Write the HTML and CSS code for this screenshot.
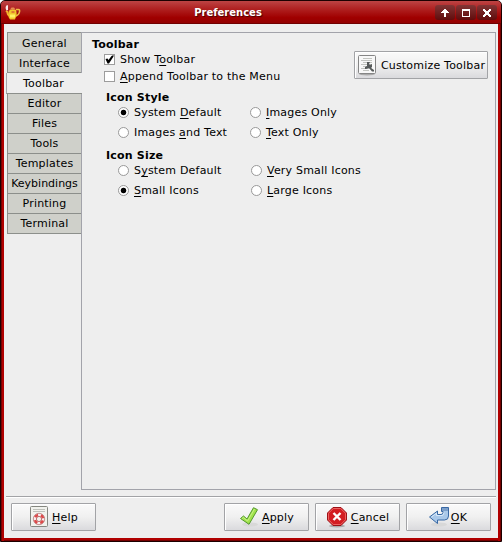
FILE: index.html
```html
<!DOCTYPE html>
<html lang="en">
<head>
<meta charset="utf-8">
<title>Preferences</title>
<link rel="stylesheet" href="styles.css">
</head>
<body>
<div class="window">
  <header class="titlebar">
    <svg class="app-icon" width="16" height="16" viewBox="0 0 16 16">
      <path d="M11 4.500h2.500q1.500 0 1 2.500-.5 3-3.500 4" fill="none" stroke="#edbd43" stroke-width="1.500"/>
      <path d="M4.500 10.500Q2.500 10 2.500 7L1 6" fill="none" stroke="#f3b32d" stroke-width="2"/>
      <path d="M4.500 5Q8 3.500 11 5q1.500 5-.5 8l-.5 1.500H5L3.500 12Q3 8 4.500 5z" fill="#f0c62c"/>
      <path d="M5 4.500h5.500L9 2.500H6.500z" fill="#e58a52"/>
      <path d="M5 9.500h5v3H5z" fill="#fff063"/>
      <path d="M6.500 6h3v2h-3z" fill="#df7a32"/>
      <path d="M1.500 5.500Q-.5 2 2 0l1 .5V5z" fill="#fbeaea"/>
    </svg>
    <h1 class="title">Preferences</h1>
    <div class="controls">
      <span class="control"><svg width="10" height="10" viewBox="0 0 10 10"><path d="M4 1h2v1h1v1h1v1h1v1H6v4H4V5H1V4h1V3h1V2h1z" fill="#fff"/></svg></span>
      <span class="control"><svg width="10" height="10" viewBox="0 0 10 10"><path d="M1 1h8v8H1zM2 3v5h6V3z" fill="#fff" fill-rule="evenodd"/></svg></span>
      <span class="control"><svg width="10" height="10" viewBox="0 0 10 10"><path d="M1 1h2v1h1v1h2V2h1V1h2v2H8v1H7v2h1v1h1v2H7V8H6V7H4v1H3v1H1V7h1V6h1V4H2V3H1z" fill="#fff"/></svg></span>
    </div>
  </header>
  <main class="body">
    <nav class="tabs">
      <div class="tab first"><span>General</span></div>
      <div class="tab second"><span>Interface</span></div>
      <div class="tab selected"><span>Toolbar</span></div>
      <div class="tab"><span>Editor</span></div>
      <div class="tab"><span>Files</span></div>
      <div class="tab"><span>Tools</span></div>
      <div class="tab"><span>Templates</span></div>
      <div class="tab"><span class="tight">Keybindings</span></div>
      <div class="tab"><span>Printing</span></div>
      <div class="tab"><span>Terminal</span></div>
    </nav>
    <section class="panel">
      <div class="options">
        <h2>Toolbar</h2>
        <div class="check"><span class="box"><svg width="9" height="9" viewBox="0 0 9 9"><path d="M0.500 4l2-.5 1 1.500L6.500 1 8.500 0v1.500L4 8.500H2.500z" fill="#000"/></svg></span><span>Show T<u>o</u>olbar</span></div>
        <div class="check"><span class="box"></span><span><u>A</u>ppend Toolbar to the Menu</span></div>
        <h3>Icon Style</h3>
        <div class="radios">
          <div class="radio"><span class="dot on"></span><span class="label">System <u>D</u>efault</span></div>
          <div class="radio"><span class="dot"></span><span class="label"><u>I</u>mages Only</span></div>
          <div class="radio"><span class="dot"></span><span class="label">Images <u>a</u>nd Text</span></div>
          <div class="radio"><span class="dot"></span><span class="label"><u>T</u>ext Only</span></div>
        </div>
        <h3>Icon Size</h3>
        <div class="radios sizes">
          <div class="radio"><span class="dot"></span><span class="label">S<u>y</u>stem Default</span></div>
          <div class="radio"><span class="dot"></span><span class="label"><u>V</u>ery Small Icons</span></div>
          <div class="radio"><span class="dot on"></span><span class="label"><u>S</u>mall Icons</span></div>
          <div class="radio"><span class="dot"></span><span class="label"><u>L</u>arge Icons</span></div>
        </div>
      </div>
      <button class="button customize">
        <svg width="20" height="22" viewBox="0 0 20 22">
          <ellipse cx="10" cy="20" rx="8" ry="1.500" fill="#aaa"/>
          <rect x="1.500" y="1.500" width="17" height="18" rx="1" fill="#f8f8f8" stroke="#858585"/>
          <path d="M6 4.500h9M4 6.500h11M6 8.500h9M4 10.500h11M6 12.500h7M4 14.500h11M6 16.500h6" stroke="#c2c4c0"/>
          <path d="M10 8h3l-1 2 1 1 2-1v3l-1 1 3 2v1.500h-2L12 14l-3 1H8v-2l2-1z" fill="#565a5a"/>
        </svg>
        <span class="label">Customize Toolbar</span>
      </button>
    </section>
  </main>
  <footer class="actions">
    <button class="button help">
      <svg width="20" height="22" viewBox="0 0 20 22">
        <rect x="1.500" y="0.500" width="17" height="20" rx="1" fill="#f1f2ed" stroke="#858780"/>
        <path d="M4 3.500h12M4 5.500h12" stroke="#bfc1bb"/>
        <circle cx="10" cy="13" r="4.200" fill="none" stroke="#f7eeee" stroke-width="3"/>
        <circle cx="10" cy="13" r="4.200" fill="none" stroke="#e04848" stroke-width="2.600" stroke-dasharray="3.600 3" stroke-dashoffset="-1.500"/>
        <circle cx="10" cy="13" r="5.700" fill="none" stroke="#b87777" stroke-width=".8"/>
        <circle cx="10" cy="13" r="2.600" fill="#f1f2ed" stroke="#b04a4a" stroke-width=".8"/>
      </svg>
      <span class="label"><u>H</u>elp</span>
    </button>
    <button class="button apply">
      <svg width="20" height="22" viewBox="0 0 20 22">
        <ellipse cx="11" cy="18.500" rx="8" ry="2" fill="#d8d8d8"/>
        <path d="M1.500 12.500L4.500 10l3.500 3L14.500 1.700l4 2L10 18.300z" fill="#a1e34b" stroke="#53982c" stroke-linejoin="round"/>
        <path d="M3 12.500l1.500-1L8.500 15l7-12" fill="none" stroke="#c8f289"/>
      </svg>
      <span class="label"><u>A</u>pply</span>
    </button>
    <button class="button cancel">
      <svg width="22" height="22" viewBox="0 0 22 22">
        <ellipse cx="11" cy="20" rx="8" ry="1.500" fill="#aaa"/>
        <path d="M7 1.500h8l5.500 5.500v7L15 19.500H7L1.500 14V7z" fill="#d31d22" stroke="#9c1117"/>
        <path d="M7.300 2.500h7.400L19.500 7.300v6.400l-4.800 4.800H7.300l-4.800-4.800V7.300z" fill="none" stroke="#ec6261"/>
        <path d="M7.500 7l7 7M14.500 7l-7 7" stroke="#fff" stroke-width="2.400"/>
      </svg>
      <span class="label"><u>C</u>ancel</span>
    </button>
    <button class="button ok">
      <svg width="22" height="22" viewBox="0 0 22 22">
        <ellipse cx="11" cy="18.500" rx="8" ry="2" fill="#d8d8d8"/>
        <path d="M13.500 1.500h7v8.500q0 4-4 4H9.500v3.500L1.500 11l8-6v3.500h3.500q2 0 2-2V5.500h-1.500z" fill="#a9c8e9" stroke="#3868a4" stroke-linejoin="round"/>
        <path d="M14 2h6v3h-6z" fill="#7c9fc9"/>
        <path d="M3.500 11l5-3.800v2.300h5.500q2-.3 2-3" fill="none" stroke="#d9e9f8"/>
      </svg>
      <span class="label"><u>O</u>K</span>
    </button>
  </footer>
</div>
</body>
</html>
```
FILE: styles.css
```css
* { box-sizing: border-box; }
body {
  margin: 0;
  background: #fff;
  font: 11px/14px "DejaVu Sans", sans-serif;
  letter-spacing: 0.2px;
  color: #000;
}
.window {
  width: 502px;
  height: 542px;
  display: flex;
  flex-direction: column;
  border: 1px solid #1c0000;
  border-radius: 5px 5px 0 0;
  background: #eee;
  box-shadow: inset 1px 0 #750000, inset -1px 0 #750000, inset 3px 0 #b00000, inset -3px 0 #b00000, inset 0 -1px #750000, inset 0 -3px #b00000;
}
.titlebar {
  height: 23px;
  flex: none;
  display: flex;
  align-items: center;
  padding: 0 4px;
  background: linear-gradient(#bd4444, #b02222 35%, #a00000 75%, #940000);
  border-bottom: 1px solid #700000;
  border-radius: 4px 4px 0 0;
}
.app-icon { flex: none; margin-top: 1px; }
.title {
  flex: 1;
  margin: 2px 0 0;
  text-align: center;
  font-size: 10px;
  line-height: 14px;
  letter-spacing: 0;
  color: #fff;
  text-shadow: 1px 1px 1px #400;
}
.controls { display: flex; gap: 1px; margin-top: 1px; }
.control {
  width: 20px;
  height: 15px;
  border-radius: 3px;
  background: linear-gradient(#823535, #600c0c);
  display: flex;
  align-items: center;
  justify-content: center;
}
.body {
  height: 466px;
  flex: none;
  display: flex;
  padding: 8px 5px 0 5px;
}
.tabs { width: 75px; }
.tab {
  height: 20px;
  margin-left: 1px;
  border-left: 1px solid #8c8f8b;
  border-bottom: 1px solid #8c8f8b;
  background: #cfd0ca;
  text-align: center;
  line-height: 20px;
}
.tab.first { height: 22px; border-top: 1px solid #8c8f8b; line-height: 22px; }
.tab.second { height: 19px; }
.tab.selected { height: 21px; line-height: 21px; margin: 0 -1px 0 0; position: relative; background: #eee; border-left-color: #a5a6aa; }
.tab.selected span { margin-right: 2px; }
.tight { letter-spacing: 0; }
.panel {
  flex: 1;
  border: 1px solid #a2a3aa;
  display: flex;
  align-items: flex-start;
}
.options { width: 272px; padding: 5px 0 0 10px; }
h2, h3 { margin: 0; font-size: 11px; line-height: 14px; }
h3 { margin: 6px 0 0 14px; }
h2 { margin-bottom: -1px; }
.check { display: flex; align-items: center; height: 17px; margin-left: 12px; }
.box {
  width: 11px;
  height: 11px;
  margin-right: 5px;
  background: #fff;
  border: 1px solid #9c9c9c;
}
.box svg { display: block; }
.radios { display: grid; grid-template-columns: 132px 132px; margin: -3px 0 7px 26px; }
.radios + h3 { margin-top: 0; }
.radios.sizes { grid-template-columns: 133px 131px; }
.radio { display: flex; align-items: center; height: 20px; white-space: nowrap; }
.label { padding-top: 2px; }
.dot {
  width: 11px;
  height: 11px;
  margin-right: 5px;
  border: 1px solid #999;
  border-radius: 50%;
  background: #fff;
}
.dot.on { background: radial-gradient(circle, #000 0 2.4px, #fff 3.2px); }
u { text-decoration: underline; text-underline-offset: 2px; text-decoration-thickness: 1px; text-decoration-skip-ink: none; }
.button {
  height: 28px;
  padding: 0;
  border: 1px solid #a2a3a6;
  border-radius: 1px;
  background: linear-gradient(#fafafa, #f0f0f0 50%, #dadadd);
  box-shadow: inset 1px 1px #fff;
  display: flex;
  align-items: center;
  justify-content: center;
  gap: 4px;
  font: inherit;
  letter-spacing: inherit;
  color: inherit;
  white-space: nowrap;
}
.button svg { flex: none; }
.customize { width: 134px; margin-top: 18px; }
.actions {
  height: 43px;
  margin: 6px 5px 0;
  border-top: 1px solid #a2a3a6;
  box-shadow: inset 0 1px #fff;
  display: flex;
  gap: 6px;
  padding: 6px 5px 0;
}
.actions .button { width: 85px; gap: 3px; }
.actions .ok { gap: 1px; padding-right: 2px; }
.actions .help { margin-right: auto; }
```
